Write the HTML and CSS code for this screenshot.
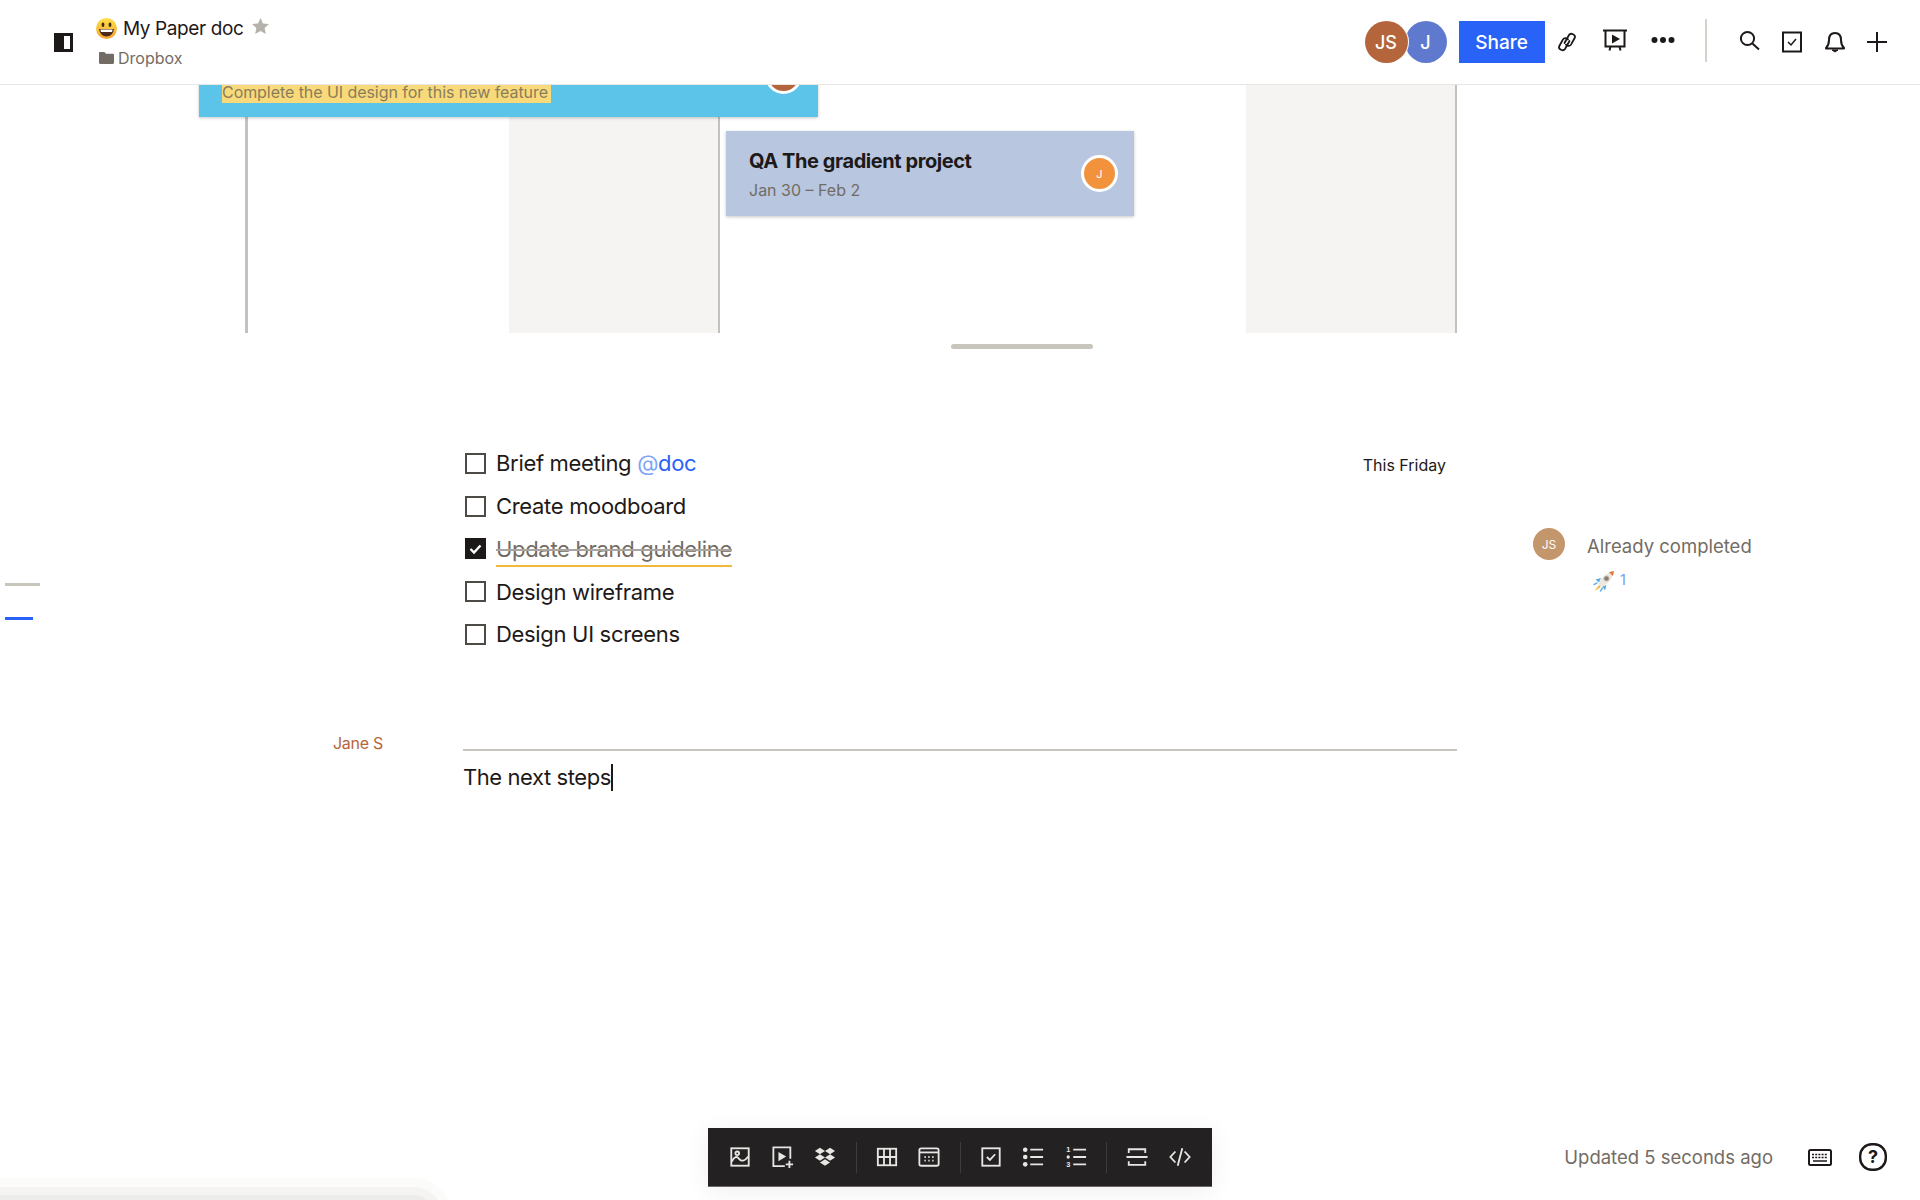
FILE: index.html
```html
<!DOCTYPE html>
<html lang="en">
<head>
  <meta charset="UTF-8">
  <meta name="viewport" content="width=device-width, initial-scale=1.0">
  <title>My Paper doc</title>
  <link rel="stylesheet" href="styles.css">
</head>
<body>
    <header>
        <div class="header-left">
            <svg class="panel-icon" viewBox="0 0 19 19"><rect width="19" height="19" fill="#1e1919"/><rect x="10" y="3" width="6" height="13" fill="#fff"/></svg>
            <div class="doc-info">
                <div class="doc-title">
                    <svg class="emoji" viewBox="0 0 21 21">
                        <defs><linearGradient id="face" x1="0" y1="0" x2="0" y2="1"><stop offset="0" stop-color="#ffdf4a"/><stop offset="1" stop-color="#f6a52c"/></linearGradient></defs>
                        <circle cx="10.5" cy="10.5" r="10.5" fill="url(#face)"/>
                        <ellipse cx="7" cy="6.8" rx="1.4" ry="2.2" fill="#3b2a1a"/>
                        <ellipse cx="14" cy="6.8" rx="1.4" ry="2.2" fill="#3b2a1a"/>
                        <path d="M3.2 11 H17.8 C17.6 15.6 14.4 18.4 10.5 18.4 C6.6 18.4 3.4 15.6 3.2 11 Z" fill="#4a2a1a"/>
                        <path d="M4.4 11.6 H16.6 C16.5 12.6 16.3 13.4 16 14 H5 C4.7 13.4 4.5 12.6 4.4 11.6 Z" fill="#fff"/>
                    </svg>
                    <span class="doc-name">My Paper doc</span>
                    <svg class="star" viewBox="0 0 17 16"><polygon points="8.5,0 11,5.4 17,6.1 12.6,10.1 13.8,16 8.5,13 3.2,16 4.4,10.1 0,6.1 6,5.4" fill="#b5b2ac"/></svg>
                </div>
                <div class="doc-folder">
                    <svg class="folder" viewBox="0 0 15 12"><path d="M0 1.2 C0 .5 .5 0 1.2 0 H5.4 L7 1.8 H13.8 C14.5 1.8 15 2.3 15 3 V10.8 C15 11.5 14.5 12 13.8 12 H1.2 C.5 12 0 11.5 0 10.8 Z" fill="#736c64"/></svg>
                    <span>Dropbox</span>
                </div>
            </div>
        </div>
        <div class="header-right">
            <div class="avatars">
                <span class="avatar avatar-js">JS</span>
                <span class="avatar avatar-j">J</span>
            </div>
            <button class="share-btn">Share</button>
            <div class="tool-group doc-tools">
                <svg class="icon" viewBox="0 0 24 24"><g fill="none" stroke="#1e1919" stroke-width="1.8" stroke-linecap="round"><path d="M9.500 13 L14 5 C15.600 2.400 21 4.600 19.800 7.800 L16 14.600 C14.800 16.600 12.200 16.200 11 14.600"/><path d="M9.500 13 L14 5 C15.600 2.400 21 4.600 19.800 7.800 L16 14.600 C14.800 16.600 12.200 16.200 11 14.600" transform="rotate(180 12 12)"/></g></svg>
                <svg class="icon icon-up" viewBox="0 0 24 24"><path d="M0 2.5 H24" stroke="#1e1919" stroke-width="2"/><path d="M2.5 2.5 V18.5 H21.5 V2.5" fill="none" stroke="#1e1919" stroke-width="2"/><polygon points="9,6.5 17,11 9,15.5" fill="#1e1919"/><path d="M7.5 18.5 L6.5 22.5 M16.5 18.5 L17.5 22.5" stroke="#1e1919" stroke-width="2"/></svg>
                <svg class="icon icon-up" viewBox="0 0 24 24"><circle cx="3.5" cy="12" r="3" fill="#1e1919"/><circle cx="12" cy="12" r="3" fill="#1e1919"/><circle cx="20.5" cy="12" r="3" fill="#1e1919"/></svg>
            </div>
            <span class="header-sep"></span>
            <div class="tool-group global-tools">
                <svg class="icon icon-up" viewBox="0 0 24 24"><circle cx="9.5" cy="10.5" r="6.6" fill="none" stroke="#1e1919" stroke-width="2"/><path d="M14.4 15.4 L21 21.6" stroke="#1e1919" stroke-width="2"/></svg>
                <svg class="icon" viewBox="0 0 24 24"><rect x="3" y="2.5" width="18" height="19" fill="none" stroke="#1e1919" stroke-width="2"/><path d="M8 12 L11 15 L16 9" fill="none" stroke="#1e1919" stroke-width="1.5"/></svg>
                <svg class="icon" viewBox="0 0 24 24"><path d="M3 18 C5 16 6 14.5 6 10 C6 5.5 8.5 3 12 3 C15.5 3 18 5.5 18 10 C18 14.5 19 16 21 18 V18.6 H3 Z" fill="none" stroke="#1e1919" stroke-width="2" stroke-linejoin="round"/><path d="M9 20 H15 L12 22 Z" fill="#1e1919" stroke="#1e1919" stroke-width="1"/></svg>
                <svg class="icon" viewBox="0 0 24 24"><path d="M2 12 H22 M12 2 V22" stroke="#1e1919" stroke-width="2"/></svg>
            </div>
        </div>
    </header>

    <section class="timeline">
        <div class="time-line time-line-first"></div>
        <div class="time-col time-col-one"></div>
        <div class="time-col time-col-two"></div>

        <div class="task task-blue">
            <span class="task-note">Complete the UI design for this new feature</span>
            <span class="task-avatar task-avatar-brown"></span>
        </div>
        <div class="task task-slate">
            <div class="task-body">
                <div class="task-title">QA The gradient project</div>
                <div class="task-dates">Jan 30 – Feb 2</div>
            </div>
            <span class="task-avatar task-avatar-orange">J</span>
        </div>
    </section>
    <div class="scroll-handle"></div>

    <main class="doc-row doc-row-list">
        <div class="outline">
            <span class="outline-mark"></span>
            <span class="outline-mark outline-mark-active"></span>
        </div>
        <ul class="checklist">
            <li>
                <span class="checkbox"></span>
                <span>Brief meeting <span class="mention"><span class="mention-at">@</span>doc</span></span>
                <span class="due">This Friday</span>
            </li>
            <li><span class="checkbox"></span><span>Create moodboard</span></li>
            <li>
                <span class="checkbox checkbox-done"><svg viewBox="0 0 21 21"><path d="M5.5 11 L9 14.5 L15.5 7.5" fill="none" stroke="#fff" stroke-width="2.4"/></svg></span>
                <span class="done-text">Update brand guideline</span>
            </li>
            <li><span class="checkbox"></span><span>Design wireframe</span></li>
            <li><span class="checkbox"></span><span>Design UI screens</span></li>
        </ul>
        <aside class="comment">
            <span class="comment-avatar">JS</span>
            <div>
                <div class="comment-text">Already completed</div>
                <div class="reaction">
                    <svg class="rocket" viewBox="0 0 22 22">
                        <path d="M1 14.500 L4 13 M7.500 21 L9.500 18" stroke="#6db7e8" stroke-width="1.600" stroke-linecap="round"/>
                        <path d="M6 15 L1.500 21 L8 17 Z" fill="#f4b63f"/>
                        <path d="M8 8 L2.500 9.500 L6 12.500 Z" fill="#5ea9e0"/>
                        <path d="M13.500 15 L12 20.500 L9.500 16.500 Z" fill="#5ea9e0"/>
                        <path d="M5.500 14.500 C7 9 12 3 21 1 C20 9 14 15 8 17 Z" fill="#ece8e0"/>
                        <path d="M16 2.300 C17.500 1.700 19.200 1.300 21 1 C20.800 2.800 20.400 4.400 19.800 6 Z" fill="#e07b3c"/>
                        <circle cx="13.500" cy="8.500" r="2.600" fill="#8b7f73" stroke="#c9c3b8" stroke-width=".8"/>
                    </svg>
                    <span class="reaction-count">1</span>
                </div>
            </div>
        </aside>
    </main>

    <section class="doc-row doc-row-edit">
        <div class="author">Jane S</div>
        <div class="edit-block">
            <div class="edit-rule"></div>
            <p class="edit-line">The next steps<span class="caret"></span></p>
        </div>
    </section>

    <footer>
        <span></span>
        <div class="toolbar">
            <button class="tb"><svg viewBox="0 0 24 24"><rect x="2.500" y="2.500" width="19" height="19"/><circle cx="9" cy="8" r="2"/><path d="M3 17 C6 11 8.500 11 11 14 C13.500 17 17 17 21 11.500"/></svg></button>
            <button class="tb"><svg viewBox="0 0 24 24"><path d="M14 22 H1.500 V1.500 H20 V14"/><polygon class="solid" points="7,6.500 15.500,11.500 7,16.500"/><path d="M19 16 V24 M15 20 H23" /></svg></button>
            <button class="tb"><svg viewBox="0 0 24 24"><polygon class="solid" points="6.500,2 12,5.500 6.500,9 1,5.500"/><polygon class="solid" points="17.500,2 23,5.500 17.500,9 12,5.500"/><polygon class="solid" points="6.500,9 12,12.500 6.500,16 1,12.500"/><polygon class="solid" points="17.500,9 23,12.500 17.500,16 12,12.500"/><polygon class="solid" points="12,14.500 17.500,18 12,21.500 6.500,18"/></svg></button>
            <span class="tb-sep"></span>
            <button class="tb"><svg viewBox="0 0 24 24"><rect x="2" y="3" width="20" height="18"/><path d="M8.700 3 V21 M15.300 3 V21 M2 12 H22"/></svg></button>
            <button class="tb"><svg viewBox="0 0 24 24"><rect x="1.500" y="2.500" width="21" height="19" rx="2"/><path d="M1.500 7 H22.500"/><path d="M7 12 H8.500 M11.200 12 H12.700 M15.500 12 H17 M7 16 H8.500 M11.200 16 H12.700 M15.500 16 H17"/></svg></button>
            <span class="tb-sep"></span>
            <button class="tb"><svg viewBox="0 0 24 24"><rect x="2.500" y="2.500" width="19" height="19"/><path d="M7.500 12 L10.800 15.200 L16.500 9"/></svg></button>
            <button class="tb"><svg viewBox="0 0 24 24"><circle class="solid" cx="3.500" cy="4" r="2.500"/><circle class="solid" cx="3.500" cy="12" r="2.500"/><circle class="solid" cx="3.500" cy="20" r="2.500"/><path d="M9 4 H23 M9 12 H23 M9 20 H23"/></svg></button>
            <button class="tb"><svg viewBox="0 0 24 24"><text x="3.500" y="7" class="tb-num">1</text><circle class="solid" cx="3.500" cy="12" r="1.800"/><text x="3.500" y="23" class="tb-num">3</text><path d="M9 4 H23 M9 12 H23 M9 20 H23"/></svg></button>
            <span class="tb-sep"></span>
            <button class="tb"><svg viewBox="0 0 24 24"><path d="M3 7.500 V3.500 H21 V7.500 M0.500 12 H23.500 M3 16.500 V20.500 H21 V16.500"/></svg></button>
            <button class="tb"><svg viewBox="0 0 24 24"><path d="M7 6 L1.500 12 L7 18 M17 6 L22.500 12 L17 18 M14.500 2.500 L9.500 21.500"/></svg></button>
        </div>
        <div class="status">
            <span class="status-text">Updated 5 seconds ago</span>
            <svg class="kb-icon" viewBox="0 0 24 17"><rect x="1" y="1" width="22" height="15" rx="1.500" fill="none" stroke="#1e1919" stroke-width="2"/><path d="M4 5.500 H20 M4 8.500 H20" stroke="#1e1919" stroke-width="1.500" stroke-dasharray="2 1.200"/><path d="M5 12 H19" stroke="#1e1919" stroke-width="1.500"/></svg>
            <svg class="help-icon" viewBox="0 0 28 28"><rect x="1.200" y="1.200" width="25.600" height="25.600" rx="11.500" fill="none" stroke="#1e1919" stroke-width="2.400"/><text x="14" y="20" text-anchor="middle" class="help-mark">?</text></svg>
        </div>
    </footer>

    <div class="drawer-edge"></div>
</body>
</html>
```

FILE: styles.css
```css
body {
    font-family: 'Inter', 'Liberation Sans', sans-serif;
    margin: 0;
    padding: 0;
    width: 1920px;
    height: 1200px;
    overflow: hidden;
    position: relative;
    display: flex;
    flex-direction: column;
    color: #1e1919;
    background: #fff;
}

/* top bar */
header {
    display: flex;
    justify-content: space-between;
    align-items: center;
    height: 84px;
    padding: 0 31px 0 54px;
    background: #fff;
    border-bottom: 1px solid #e8e6e3;
    position: relative;
    z-index: 2;
}

.header-left {
    display: flex;
    align-items: center;
    gap: 23px;
}

.panel-icon {
    width: 19px;
    height: 19px;
}

.doc-info {
    display: flex;
    flex-direction: column;
    gap: 5px;
    margin-top: -1px;
}

.doc-title {
    display: flex;
    align-items: center;
    height: 28px;
}

.emoji {
    width: 21px;
    height: 21px;
    margin-right: 6px;
}

.doc-name {
    font-size: 19px;
    letter-spacing: -0.4px;
}

.star {
    width: 17px;
    height: 16px;
    margin-left: 9px;
    margin-bottom: 4px;
}

.doc-folder {
    display: flex;
    align-items: center;
    gap: 4px;
    padding-left: 3px;
    font-size: 16px;
    line-height: 22px;
    color: #736c64;
}

.folder {
    width: 15px;
    height: 12px;
}

.header-right {
    display: flex;
    align-items: center;
}

.avatars {
    display: flex;
    align-items: center;
}

.avatar {
    display: flex;
    align-items: center;
    justify-content: center;
    width: 42px;
    height: 42px;
    border-radius: 50%;
    color: #fff;
    font-size: 18px;
    font-weight: 500;
}

.avatar-js {
    width: 43px;
    background: #b5653c;
    box-shadow: 0 0 0 1px #fff;
    position: relative;
    z-index: 1;
}

.avatar-j {
    background: #5f79cf;
    margin-left: -3px;
}

.share-btn {
    width: 86px;
    height: 42px;
    margin-left: 12px;
    border: 0;
    background: #2962f7;
    color: #fff;
    font-family: inherit;
    font-size: 19px;
    font-weight: 500;
}

.tool-group {
    display: flex;
    align-items: center;
}

.doc-tools {
    gap: 24px;
    margin-left: 10px;
}

.global-tools {
    gap: 18.5px;
}

.icon {
    width: 24px;
    height: 24px;
}

.icon-up {
    margin-top: -5px;
}

.header-sep {
    width: 2px;
    height: 43px;
    margin: -3px 31px 0 30px;
    background: #d5d2cb;
}

/* timeline canvas */
.timeline {
    position: relative;
    height: 248px;
    flex-shrink: 0;
}

.time-line {
    position: absolute;
    top: 0;
    bottom: 0;
}

.time-line-first {
    left: 245px;
    width: 3px;
    background: #c4c2bd;
}

.time-col {
    position: absolute;
    top: 0;
    bottom: 0;
    background: #f5f4f2;
    border-right: 2px solid #c4c2bd;
}

.time-col-one {
    left: 509px;
    width: 209px;
}

.time-col-two {
    left: 1246px;
    width: 209px;
}

.task {
    position: absolute;
    box-sizing: border-box;
    display: flex;
    justify-content: space-between;
    align-items: center;
    box-shadow: 0 1px 3px rgba(0, 0, 0, 0.22);
}

.task-blue {
    left: 199px;
    top: -52px;
    width: 619px;
    height: 84px;
    padding: 0 16px 0 23px;
    background: #5bc4e8;
}

.task-slate {
    left: 726px;
    top: 46px;
    width: 408px;
    height: 85px;
    padding: 0 16px 0 23px;
    background: #b8c6e0;
}

.task-body {
    margin-top: 2px;
}

.task-note {
    align-self: flex-end;
    margin-bottom: 14px;
    padding: 0 3px 0 0;
    background: #f8da7a;
    color: #8a7d5c;
    font-size: 16px;
    letter-spacing: -0.06px;
    line-height: 22px;
}

.task-title {
    font-size: 20px;
    font-weight: 700;
    letter-spacing: -0.43px;
    line-height: 26px;
}

.task-dates {
    margin-top: 5px;
    color: #736c64;
    font-size: 16px;
    line-height: 22px;
}

.task-avatar {
    display: flex;
    align-items: center;
    justify-content: center;
    box-sizing: border-box;
    width: 37px;
    height: 37px;
    border: 3px solid #fff;
    border-radius: 50%;
    color: #fff;
    font-size: 11px;
}

.task-avatar-brown {
    background: #b5653c;
}

.task-avatar-orange {
    background: #f2923c;
}

.scroll-handle {
    flex-shrink: 0;
    width: 142px;
    height: 5px;
    margin: 11px 0 0 951px;
    border-radius: 3px;
    background: #c8c5bd;
}

/* document body */
.doc-row {
    display: grid;
    grid-template-columns: 463px 994px 1fr;
    flex-shrink: 0;
}

.doc-row-list {
    margin-top: 93px;
}

.outline {
    display: flex;
    flex-direction: column;
    gap: 31px;
    padding: 141px 0 0 5px;
}

.outline-mark {
    display: block;
    width: 35px;
    height: 3px;
    background: #c8c5bd;
}

.outline-mark-active {
    width: 28px;
    background: #2962f7;
}

.checklist {
    list-style-type: none;
    margin: 0;
    padding: 0 11px 0 2px;
}

.checklist li {
    display: flex;
    align-items: center;
    gap: 10px;
    height: 42.75px;
    font-size: 22px;
    letter-spacing: -0.32px;
}

.checkbox {
    box-sizing: border-box;
    flex-shrink: 0;
    width: 21px;
    height: 21px;
    border: 2px solid #4e4a46;
}

.checkbox-done {
    border: 0;
    background: #1e1919;
}

.checkbox-done svg {
    display: block;
    width: 21px;
    height: 21px;
}

.mention {
    color: #2962f7;
}

.mention-at {
    color: #7fa5f5;
}

.due {
    margin-left: auto;
    margin-top: 4px;
    font-size: 16px;
    letter-spacing: 0;
}

.done-text {
    margin-top: 5px;
    color: #736c64;
    text-decoration: line-through;
    text-decoration-color: #a9a59e;
    padding-bottom: 3px;
    border-bottom: 2.5px solid #f0b93b;
}

.comment {
    display: flex;
    gap: 22px;
    padding: 86px 0 0 76px;
}

.comment-avatar {
    display: flex;
    align-items: center;
    justify-content: center;
    flex-shrink: 0;
    width: 32px;
    height: 32px;
    border-radius: 50%;
    background: #c4966c;
    color: #fff;
    font-size: 12px;
}

.comment-text {
    color: #736c64;
    font-size: 18.5px;
    line-height: 24px;
    margin-top: 6px;
}

.reaction {
    display: flex;
    align-items: center;
    gap: 5px;
    margin: 12px 0 0 6px;
}

.rocket {
    width: 22px;
    height: 22px;
}

.reaction-count {
    color: #7fa5f5;
    font-size: 14px;
    font-weight: 500;
    margin-top: -3px;
}

.doc-row-edit {
    margin-top: 78.25px;
}

.author {
    margin-top: -1px;
    padding-left: 333px;
    color: #b5653c;
    font-size: 16px;
    letter-spacing: -0.3px;
    line-height: 20px;
}

.edit-block {
    padding-top: 15px;
}

.edit-rule {
    height: 2px;
    background: #c8c5bd;
}

.edit-line {
    margin: 11px 0 0;
    font-size: 22px;
    letter-spacing: -0.42px;
    line-height: 30px;
}

.caret {
    display: inline-block;
    width: 1.5px;
    height: 27px;
    vertical-align: -6px;
    background: #1e1919;
}

/* bottom bar */
footer {
    display: grid;
    grid-template-columns: 1fr auto 1fr;
    align-items: center;
    margin-top: auto;
    padding-bottom: 14px;
}

.toolbar {
    display: flex;
    align-items: center;
    height: 58px;
    padding: 0 11px;
    background: #232122;
    box-shadow: 0 1px 0 #6b6866, 0 4px 24px rgba(0, 0, 0, 0.07);
}

.tb {
    display: flex;
    align-items: center;
    justify-content: center;
    width: 42.5px;
    height: 42px;
    padding: 0;
    border: 0;
    background: none;
}

.tb svg {
    width: 22px;
    height: 22px;
    overflow: visible;
    fill: none;
    stroke: #e8e6e2;
    stroke-width: 2;
}

.tb svg .solid {
    fill: #e8e6e2;
    stroke: none;
}

.tb-num {
    fill: #e8e6e2;
    stroke: none;
    font-size: 8px;
    font-weight: 700;
    text-anchor: middle;
}

.tb-sep {
    width: 1px;
    height: 31px;
    margin: 0 9px;
    background: #3f3d3c;
}

.status {
    display: flex;
    justify-content: flex-end;
    align-items: center;
    padding-right: 33px;
}

.status-text {
    color: #736c64;
    font-size: 18.5px;
}

.kb-icon {
    width: 24px;
    height: 17px;
    margin-left: 35px;
}

.help-icon {
    width: 28px;
    height: 28px;
    margin-left: 27px;
}

.help-mark {
    fill: #1e1919;
    font-size: 18px;
    font-weight: 700;
}

.drawer-edge {
    position: absolute;
    left: -30px;
    top: 1195px;
    width: 464px;
    height: 40px;
    border-radius: 24px;
    background: #ececea;
    box-shadow: 0 0 0 8px #f5f4f2, 0 0 0 17px #fbfbfa;
}
```
